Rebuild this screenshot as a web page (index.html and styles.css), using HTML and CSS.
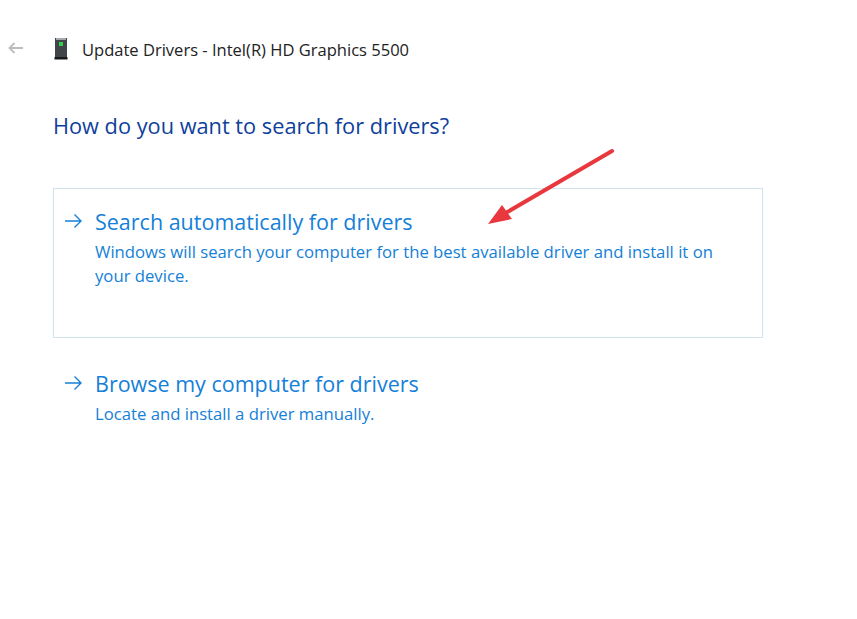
FILE: index.html
```html
<!DOCTYPE html>
<html lang="en">
<head>
<meta charset="utf-8">
<title>Update Drivers</title>
<link rel="stylesheet" href="styles.css">
</head>
<body>
<div class="wizard">
  <header class="titlebar">
    <svg class="back" width="16" height="12" viewBox="0 0 16 12"><path d="M15 6H1.500M6.500 1L1.500 6l5 5" fill="none" stroke="#bdbdbd" stroke-width="1.800"/></svg>
    <svg class="device" width="18" height="24" viewBox="0 0 18 24">
      <rect x="3" y="1" width="12" height="19" fill="#3f4548"/>
      <rect x="4" y="1" width="10" height="2" fill="#a3a9ac"/>
      <rect x="7" y="5" width="4" height="4" fill="#35d04a"/>
      <rect x="2.500" y="20" width="13" height="2.500" fill="#15181a"/>
    </svg>
    <span class="title">Update Drivers - Intel(R) HD Graphics 5500</span>
  </header>
  <main class="content">
    <h1 class="question">How do you want to search for drivers?</h1>
    <div class="option option-selected">
      <svg class="go" width="19" height="16" viewBox="0 0 19 16"><path d="M1 8h16M10.500 1.500L17 8l-6.500 6.500" fill="none" stroke="#1580d8" stroke-width="1.400"/></svg>
      <div class="option-text">
        <div class="option-title">Search automatically for drivers</div>
        <div class="option-desc">Windows will search your computer for the best available driver and install it on your device.</div>
      </div>
    </div>
    <div class="option">
      <svg class="go" width="19" height="16" viewBox="0 0 19 16"><path d="M1 8h16M10.500 1.500L17 8l-6.500 6.500" fill="none" stroke="#1580d8" stroke-width="1.400"/></svg>
      <div class="option-text">
        <div class="option-title">Browse my computer for drivers</div>
        <div class="option-desc">Locate and install a driver manually.</div>
      </div>
    </div>
  </main>
</div>
<svg class="annotation" width="140" height="90" viewBox="0 0 140 90">
  <path d="M132 11L24 74" stroke="#e8383d" stroke-width="4" stroke-linecap="round" fill="none"/>
  <path d="M8 84L22 65L32 79Z" fill="#e8383d"/>
</svg>
</body>
</html>
```
FILE: styles.css
```css
html, body {
  margin: 0;
  padding: 0;
  background: #fff;
}
body {
  width: 857px;
  height: 619px;
  overflow: hidden;
  position: relative;
  font-family: "Open Sans", "Noto Sans", sans-serif;
}
.titlebar {
  display: flex;
  align-items: center;
  height: 24px;
  padding: 37px 0 0 8px;
}
.back { margin-right: 28px; margin-top: -3px; }
.device { margin-right: 12px; }
.title {
  font-size: 16.550px;
  color: #222;
  white-space: nowrap;
}
.content {
  padding: 0 0 0 53px;
}
.question {
  margin: 50px 0 0;
  font-size: 21.750px;
  line-height: 30px;
  font-weight: 400;
  color: #0f3f9c;
}
.option {
  width: 710px;
  box-sizing: border-box;
  display: flex;
  border: 1px solid transparent;
  padding: 18px 20px 0 10px;
  gap: 12px;
}
.option-selected {
  margin-top: 47px;
  height: 150px;
  border-color: #cfe3ee;
  margin-bottom: 12px;
}
.go { flex: none; margin-top: 6px; }
.option-title {
  font-size: 21.500px;
  line-height: 30px;
  color: #1580d8;
}
.option-desc {
  margin-top: 3px;
  font-size: 16.700px;
  line-height: 24px;
  color: #1580d8;
}
.annotation {
  position: absolute;
  left: 480px;
  top: 140px;
}
```
